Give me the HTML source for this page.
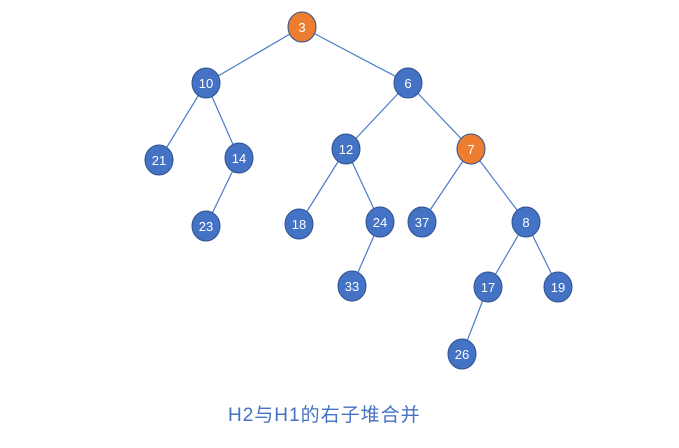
<!DOCTYPE html><html><head><style>body{margin:0;background:#fff;width:679px;height:443px;overflow:hidden}</style></head><body>
<svg width="679" height="443" xmlns="http://www.w3.org/2000/svg" font-family="Liberation Sans, sans-serif">
<g stroke="#4a7cc8" stroke-width="1.2">
<line x1="302" y1="27" x2="206" y2="83"/><line x1="302" y1="27" x2="408" y2="83"/>
<line x1="206" y1="83" x2="159" y2="160"/><line x1="206" y1="83" x2="239" y2="158"/>
<line x1="408" y1="83" x2="346" y2="149"/><line x1="408" y1="83" x2="471" y2="149"/>
<line x1="239" y1="158" x2="206" y2="226"/>
<line x1="346" y1="149" x2="299" y2="224"/><line x1="346" y1="149" x2="380" y2="222"/>
<line x1="471" y1="149" x2="422" y2="222"/><line x1="471" y1="149" x2="526" y2="222"/>
<line x1="380" y1="222" x2="352" y2="286"/>
<line x1="526" y1="222" x2="488" y2="287"/><line x1="526" y1="222" x2="558" y2="287"/>
<line x1="488" y1="287" x2="462" y2="354"/>
</g>
<g stroke="#2f528f" stroke-width="1" font-size="13" fill="#fff" text-anchor="middle">
<g fill="#4472c4">
<ellipse cx="206" cy="83" rx="14" ry="15"/><ellipse cx="408" cy="83" rx="14" ry="15"/>
<ellipse cx="159" cy="160" rx="14" ry="15"/><ellipse cx="239" cy="158" rx="14" ry="15"/>
<ellipse cx="346" cy="149" rx="14" ry="15"/><ellipse cx="206" cy="226" rx="14" ry="15"/>
<ellipse cx="299" cy="224" rx="14" ry="15"/><ellipse cx="380" cy="222" rx="14" ry="15"/>
<ellipse cx="422" cy="222" rx="14" ry="15"/><ellipse cx="526" cy="222" rx="14" ry="15"/>
<ellipse cx="352" cy="286" rx="14" ry="15"/><ellipse cx="488" cy="287" rx="14" ry="15"/>
<ellipse cx="558" cy="287" rx="14" ry="15"/><ellipse cx="462" cy="354" rx="14" ry="15"/>
</g>
<g fill="#ed7d31"><ellipse cx="302" cy="27" rx="14" ry="15"/><ellipse cx="471" cy="149" rx="14" ry="15"/></g>
<g stroke="none" fill="#fff">
<text x="302" y="32">3</text><text x="206" y="88">10</text><text x="408" y="88">6</text>
<text x="159" y="165">21</text><text x="239" y="163">14</text><text x="346" y="154">12</text>
<text x="471" y="154">7</text><text x="206" y="231">23</text><text x="299" y="229">18</text>
<text x="380" y="227">24</text><text x="422" y="227">37</text><text x="526" y="227">8</text>
<text x="352" y="291">33</text><text x="488" y="292">17</text><text x="558" y="292">19</text>
<text x="462" y="359">26</text>
</g></g>
<text x="228" y="421" font-size="19" letter-spacing="1" fill="#4472c4" font-family="Liberation Sans, Noto Sans CJK SC, sans-serif">H2与H1的右子堆合并</text>
</svg></body></html>
